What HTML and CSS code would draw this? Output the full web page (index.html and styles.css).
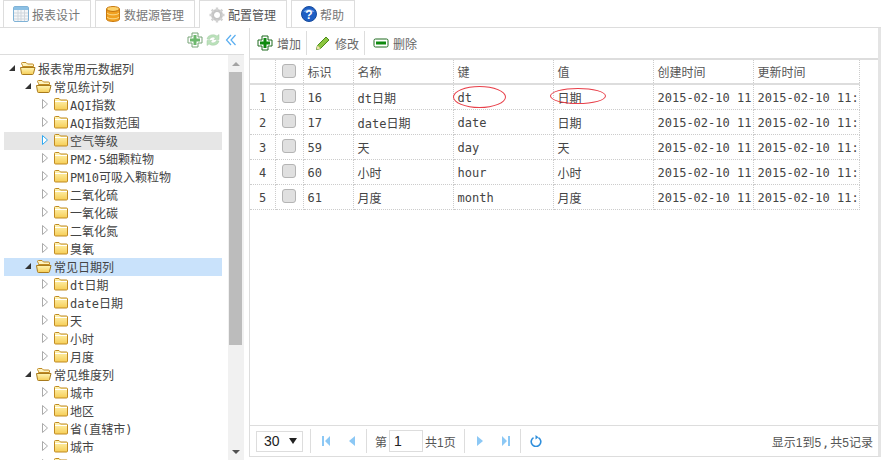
FILE: index.html
```html
<!DOCTYPE html>
<html lang="zh-CN">
<head>
    <meta charset="UTF-8">
    <title>配置管理</title>
    <link rel="stylesheet" href="styles.css">
</head>
<body>
    <svg class="defs" width="0" height="0">
        <defs>
            <linearGradient id="fold" x1="0" y1="0" x2="0" y2="1">
                <stop offset="0" stop-color="#fff6b8"/>
                <stop offset="1" stop-color="#f6cd55"/>
            </linearGradient>
            <symbol id="folder" viewBox="0 0 16 16">
                <path d="M1.500 3.500q0-1 1-1h3.500l1.500 1.500h6q1 0 1 1v8q0 1-1 1h-11q-1 0-1-1z" fill="url(#fold)" stroke="#c08a22"/>
                <path d="M2 5.500h12" stroke="#fff" fill="none"/>
            </symbol>
            <symbol id="folder-open" viewBox="0 0 16 16">
                <path d="M1.500 3.500q0-1 1-1h3.500l1.500 1.500h5q1 0 1 1v1.500h-11v-1z" fill="#fdf3c0" stroke="#c08a22"/>
                <path d="M.5 7.500h14.500l-1.500 6q-.2 1-1 1h-10q-1 0-1-1z" fill="url(#fold)" stroke="#a87a1c"/>
            </symbol>
            <symbol id="arr-open" viewBox="0 0 8 8">
                <path d="M1 7l6-6v6z" fill="#333"/>
            </symbol>
            <symbol id="arr-shut" viewBox="0 0 8 10">
                <path d="M1.500 .5l5 4.500-5 4.500z" fill="#fff" stroke="#aaa"/>
            </symbol>
            <symbol id="plus" viewBox="0 0 16 16">
                <path d="M5 1h6v4h4v6h-4v4h-6v-4h-4v-6h4z" fill="#fff" stroke="#1f6b1f"/>
                <path d="M6.500 3h3v3.500h3.500v3h-3.500v3.500h-3v-3.500h-3.500v-3h3.500z" fill="#0f8a0f"/>
            </symbol>
        </defs>
    </svg>

    <div class="tabs">
        <a class="tab tab-design">
            <svg class="tab-ico" viewBox="0 0 16 16"><rect x=".5" y=".5" width="15" height="15" rx="1.500" fill="#f4f6f8" stroke="#7fb2d6"/><rect x="1" y="1" width="14" height="3" fill="#8cc0e4"/><path d="M1 7h14M1 10h14M1 13h14M5 4v11M8 4v11M11.500 4v11" stroke="#cfd6dc"/></svg>
            报表设计
        </a>
        <a class="tab tab-source">
            <svg class="tab-ico" viewBox="0 0 16 16"><ellipse cx="8" cy="3" rx="6.500" ry="2.500" fill="#fcd16a" stroke="#c97a10"/><path d="M1.500 3v10c0 1.400 2.900 2.500 6.500 2.500s6.500-1.100 6.500-2.500v-10c0 1.400-2.900 2.500-6.500 2.500s-6.500-1.100-6.500-2.500z" fill="#f0a020" stroke="#c97a10"/><path d="M2 7c1 1.200 3 1.800 6 1.800s5-.6 6-1.800M2 11c1 1.200 3 1.800 6 1.800s5-.6 6-1.800" stroke="#fbdc8c" fill="none"/></svg>
            数据源管理
        </a>
        <a class="tab tab-config active">
            <svg class="tab-ico" viewBox="0 0 16 16"><circle cx="8" cy="8" r="4.500" fill="none" stroke="#c4c4c4" stroke-width="3"/><path d="M8 .5v3M8 12.500v3M.5 8h3M12.500 8h3M2.700 2.700l2.100 2.100M11.200 11.200l2.100 2.100M2.700 13.300l2.100-2.100M11.200 4.800l2.100-2.100" stroke="#d2d2d2" stroke-width="2.400"/></svg>
            配置管理
        </a>
        <a class="tab tab-help">
            <svg class="tab-ico" viewBox="0 0 16 16"><circle cx="8" cy="8" r="7.500" fill="#1e5fc4" stroke="#174a9c"/><path d="M2.500 6a6 4.500 0 0 1 11 0z" fill="#6d9ee6"/><text x="8" y="12.500" class="help-q">?</text></svg>
            帮助
        </a>
    </div>

    <div class="main">
        <div class="left">
            <div class="left-head">
                <svg class="ico pale" viewBox="0 0 16 16"><use href="#plus"/></svg>
                <svg class="ico pale" viewBox="0 0 16 16"><path d="M2 7a6 5 0 0 1 10-3l2-1.500v5h-5l1.500-1.500a3.500 3 0 0 0-6 1.500zM14 9a6 5 0 0 1-10 3l-2 1.500v-5h5l-1.500 1.500a3.500 3 0 0 0 6-1.500z" fill="#8ed08e" stroke="#6aa86a" stroke-width=".5"/></svg>
                <svg class="ico-collapse" viewBox="0 0 12 12"><path d="M6 1l-4.500 5 4.500 5M10.500 1l-4.500 5 4.500 5" fill="none" stroke="#5aaef0" stroke-width="1.200"/></svg>
            </div>
            <div class="left-body">
                <div class="tree">
                    <div class="node lv0"><svg class="arrow"><use href="#arr-open"/></svg><svg class="fold"><use href="#folder-open"/></svg>报表常用元数据列</div>
                    <div class="node lv1"><svg class="arrow"><use href="#arr-open"/></svg><svg class="fold"><use href="#folder-open"/></svg>常见统计列</div>
                    <div class="node lv2"><svg class="arrow"><use href="#arr-shut"/></svg><svg class="fold"><use href="#folder"/></svg>AQI指数</div>
                    <div class="node lv2"><svg class="arrow"><use href="#arr-shut"/></svg><svg class="fold"><use href="#folder"/></svg>AQI指数范围</div>
                    <div class="node lv2 hover"><svg class="arrow"><path d="M1.500 3.500l5 4.500-5 4.500z" fill="#fff" stroke="#2fa8f0"/></svg><svg class="fold"><use href="#folder"/></svg>空气等级</div>
                    <div class="node lv2"><svg class="arrow"><use href="#arr-shut"/></svg><svg class="fold"><use href="#folder"/></svg>PM2·5细颗粒物</div>
                    <div class="node lv2"><svg class="arrow"><use href="#arr-shut"/></svg><svg class="fold"><use href="#folder"/></svg>PM10可吸入颗粒物</div>
                    <div class="node lv2"><svg class="arrow"><use href="#arr-shut"/></svg><svg class="fold"><use href="#folder"/></svg>二氧化硫</div>
                    <div class="node lv2"><svg class="arrow"><use href="#arr-shut"/></svg><svg class="fold"><use href="#folder"/></svg>一氧化碳</div>
                    <div class="node lv2"><svg class="arrow"><use href="#arr-shut"/></svg><svg class="fold"><use href="#folder"/></svg>二氧化氮</div>
                    <div class="node lv2"><svg class="arrow"><use href="#arr-shut"/></svg><svg class="fold"><use href="#folder"/></svg>臭氧</div>
                    <div class="node lv1 selected"><svg class="arrow"><use href="#arr-open"/></svg><svg class="fold"><use href="#folder-open"/></svg>常见日期列</div>
                    <div class="node lv2"><svg class="arrow"><use href="#arr-shut"/></svg><svg class="fold"><use href="#folder"/></svg>dt日期</div>
                    <div class="node lv2"><svg class="arrow"><use href="#arr-shut"/></svg><svg class="fold"><use href="#folder"/></svg>date日期</div>
                    <div class="node lv2"><svg class="arrow"><use href="#arr-shut"/></svg><svg class="fold"><use href="#folder"/></svg>天</div>
                    <div class="node lv2"><svg class="arrow"><use href="#arr-shut"/></svg><svg class="fold"><use href="#folder"/></svg>小时</div>
                    <div class="node lv2"><svg class="arrow"><use href="#arr-shut"/></svg><svg class="fold"><use href="#folder"/></svg>月度</div>
                    <div class="node lv1"><svg class="arrow"><use href="#arr-open"/></svg><svg class="fold"><use href="#folder-open"/></svg>常见维度列</div>
                    <div class="node lv2"><svg class="arrow"><use href="#arr-shut"/></svg><svg class="fold"><use href="#folder"/></svg>城市</div>
                    <div class="node lv2"><svg class="arrow"><use href="#arr-shut"/></svg><svg class="fold"><use href="#folder"/></svg>地区</div>
                    <div class="node lv2"><svg class="arrow"><use href="#arr-shut"/></svg><svg class="fold"><use href="#folder"/></svg>省(直辖市)</div>
                    <div class="node lv2"><svg class="arrow"><use href="#arr-shut"/></svg><svg class="fold"><use href="#folder"/></svg>城市</div>
                    <div class="node lv2"><svg class="arrow"><use href="#arr-shut"/></svg><svg class="fold"><use href="#folder"/></svg></div>
                </div>
                <div class="scrollbar">
                    <div class="sb-up"></div>
                    <div class="sb-thumb"></div>
                    <div class="sb-rest"></div>
                    <div class="sb-down"></div>
                </div>
            </div>
        </div>

        <div class="right">
            <div class="toolbar">
                <a class="tool"><svg class="ico" viewBox="0 0 16 16"><use href="#plus"/></svg>增加</a>
                <span class="sep"></span>
                <a class="tool"><svg class="ico" viewBox="0 0 16 16"><path d="M1.500 14.500l1-4 8.500-8.500 3 3-8.500 8.500z" fill="#8cc63f" stroke="#4d8a1c"/><path d="M1.500 14.500l1-4 3 3z" fill="#f3dfae"/></svg>修改</a>
                <span class="sep"></span>
                <a class="tool"><svg class="ico" viewBox="0 0 16 16"><rect x="1" y="4" width="14" height="8" rx="1.500" fill="#fff" stroke="#1f6b1f"/><rect x="3" y="6.500" width="10" height="3" fill="#0f8a0f"/></svg>删除</a>
            </div>
            <div class="grid-wrap">
                <table class="grid">
                    <colgroup>
                        <col class="c-num"><col class="c-chk"><col class="c-id"><col class="c-wide"><col class="c-wide"><col class="c-wide"><col class="c-wide"><col class="c-last">
                    </colgroup>
                    <thead>
                        <tr><th></th><th><span class="chk"></span></th><th>标识</th><th>名称</th><th>键</th><th>值</th><th>创建时间</th><th>更新时间</th></tr>
                    </thead>
                    <tbody>
                        <tr><td class="num">1</td><td><span class="chk"></span></td><td>16</td><td>dt日期</td><td>dt</td><td>日期</td><td>2015-02-10 11</td><td>2015-02-10 11:</td></tr>
                        <tr><td class="num">2</td><td><span class="chk"></span></td><td>17</td><td>date日期</td><td>date</td><td>日期</td><td>2015-02-10 11</td><td>2015-02-10 11:</td></tr>
                        <tr><td class="num">3</td><td><span class="chk"></span></td><td>59</td><td>天</td><td>day</td><td>天</td><td>2015-02-10 11</td><td>2015-02-10 11:</td></tr>
                        <tr><td class="num">4</td><td><span class="chk"></span></td><td>60</td><td>小时</td><td>hour</td><td>小时</td><td>2015-02-10 11</td><td>2015-02-10 11:</td></tr>
                        <tr><td class="num">5</td><td><span class="chk"></span></td><td>61</td><td>月度</td><td>month</td><td>月度</td><td>2015-02-10 11</td><td>2015-02-10 11:</td></tr>
                    </tbody>
                </table>
                <span class="ring ring-key"></span>
                <span class="ring ring-val"></span>
            </div>
            <div class="pager">
                <div class="page-size">30<span class="caret"></span></div>
                <span class="sep"></span>
                <svg class="pg-ico" viewBox="0 0 12 12"><path d="M2 1h2v10h-2zM10 1v10l-5-5z"/></svg>
                <svg class="pg-ico" viewBox="0 0 12 12"><path d="M9 1v10l-6-5z"/></svg>
                <span class="sep"></span>
                <span class="pg-text">第</span>
                <span class="pg-input">1</span>
                <span class="pg-text pg-total">共1页</span>
                <span class="sep"></span>
                <svg class="pg-ico" viewBox="0 0 12 12"><path d="M3 1v10l6-5z"/></svg>
                <svg class="pg-ico" viewBox="0 0 12 12"><path d="M2 1v10l5-5zM8 1h2v10h-2z"/></svg>
                <span class="sep"></span>
                <svg class="pg-ico" viewBox="0 0 12 12"><path d="M3.500 2.600a4.800 4.800 0 1 0 5 0" fill="none" stroke="#2f8fdc" stroke-width="1.600"/><path d="M5.500 0v4.500l3-2.200z" fill="#2f8fdc"/></svg>
                <span class="pg-info">显示1到5<span class="comma">,</span>共5记录</span>
            </div>
        </div>
    </div>
</body>
</html>
```

FILE: styles.css
```css
* {
    box-sizing: border-box;
}
html, body {
    margin: 0;
    height: 460px;
    overflow: hidden;
    background-color: white;
}
body {
    display: flex;
    flex-direction: column;
    font-family: "DejaVu Sans Mono", "Noto Sans CJK SC", monospace;
    font-size: 12px;
    color: #444;
}
.defs {
    position: absolute;
}

/* tabs */
.tabs {
    display: flex;
    height: 28px;
    padding-left: 3px;
    border-bottom: 1px solid #ddd;
    font-family: "Noto Sans CJK SC", sans-serif;
}
.tab {
    display: flex;
    align-items: center;
    gap: 3px;
    height: 27px;
    padding-left: 9px;
    border: 1px solid #ddd;
    border-bottom: none;
    color: #777;
}
.tab-design {
    width: 88px;
}
.tab-source {
    width: 100px;
    margin-left: 4px;
}
.tab-config {
    width: 88px;
    margin-left: 4px;
}
.tab-help {
    width: 64px;
    margin-left: 4px;
}
.tab.active {
    height: 28px;
    background-color: white;
    color: #555;
}
.tab-ico {
    width: 16px;
    height: 16px;
    flex: none;
}
.help-q {
    font-family: "Liberation Sans", sans-serif;
    font-size: 12px;
    font-weight: bold;
    fill: white;
    text-anchor: middle;
}

/* left panel */
.main {
    display: flex;
    flex: 1;
    min-height: 0;
}
.left {
    display: flex;
    flex-direction: column;
    width: 244px;
    flex: none;
}
.left-head {
    display: flex;
    align-items: center;
    justify-content: flex-end;
    gap: 2px;
    height: 27px;
    padding: 0 7px 3px 0;
    border-bottom: 1px solid #ddd;
}
.ico {
    width: 16px;
    height: 16px;
    flex: none;
}
.ico.pale {
    opacity: 0.6;
}
.ico-collapse {
    width: 12px;
    height: 12px;
    margin-left: 2px;
}
.left-body {
    display: flex;
    flex: 1;
    min-height: 0;
}
.tree {
    flex: 1;
    padding: 5px 6px 0 4px;
    overflow: hidden;
}
.node {
    display: flex;
    align-items: center;
    height: 18px;
    padding-bottom: 2px;
    white-space: nowrap;
}
.node.hover {
    background-color: #e6e6e6;
}
.node.selected {
    background-color: #c9e2fb;
}
.lv0 {
    padding-left: 4px;
}
.lv1 {
    padding-left: 20px;
}
.lv2 {
    padding-left: 37px;
}
.arrow {
    width: 8px;
    height: 16px;
    margin-right: 4px;
    flex: none;
}
.fold {
    width: 16px;
    height: 16px;
    margin-right: 2px;
    flex: none;
}
.lv2 .fold {
    margin-right: 1px;
}
.scrollbar {
    display: flex;
    flex-direction: column;
    width: 16px;
    flex: none;
    background-color: #f1f1f1;
}
.sb-up, .sb-down {
    height: 17px;
    flex: none;
    display: flex;
    align-items: center;
    justify-content: center;
}
.sb-up::before {
    content: "";
    border: 4px solid transparent;
    border-top: none;
    border-bottom: 4px solid #a3a3a3;
}
.sb-down::before {
    content: "";
    border: 4px solid transparent;
    border-bottom: none;
    border-top: 4px solid #505050;
}
.sb-thumb {
    height: 273px;
    margin: 0 2px 0 1px;
    background-color: #bcbcbc;
}
.sb-rest {
    flex: 1;
}

/* right panel */
.right {
    display: flex;
    flex-direction: column;
    flex: none;
    width: 632px;
    height: 429px;
    margin-left: 5px;
    border-left: 1px solid #ddd;
    border-right: 3px solid #e4e4e4;
    border-bottom: 1px solid #ddd;
}
.toolbar {
    display: flex;
    align-items: center;
    height: 32px;
    padding-left: 7px;
    border-bottom: 2px solid #ddd;
    font-family: "Noto Sans CJK SC", sans-serif;
    color: #666;
}
.toolbar .sep {
    margin: 0 8px 0 5px;
}
.tool {
    display: flex;
    align-items: center;
    gap: 4px;
}
.sep {
    width: 1px;
    height: 24px;
    background-color: #ddd;
    flex: none;
}
.grid-wrap {
    flex: 1;
    position: relative;
    min-height: 0;
}
.grid {
    border-collapse: collapse;
    table-layout: fixed;
    width: 609px;
}
.c-num {
    width: 25px;
}
.c-chk {
    width: 28px;
}
.c-id {
    width: 50px;
}
.c-wide {
    width: 100px;
}
.c-last {
    width: 106px;
}
.grid th, .grid td {
    height: 25px;
    padding: 0 0 0 4px;
    border-right: 1px dotted #ccc;
    border-bottom: 1px dotted #ccc;
    overflow: hidden;
    white-space: nowrap;
    text-align: left;
    font-weight: normal;
}
.grid td {
    padding-top: 2px;
}
.grid th {
    height: 24px;
    border-bottom: 2px solid #ddd;
    color: #555;
}
.grid td.num {
    padding-left: 9px;
}
.chk {
    display: block;
    width: 14px;
    height: 14px;
    margin: -2px 0 0 2px;
    border: 1px solid #b4b4b4;
    border-radius: 3px;
    background-color: #e0e0e0;
}
.grid td .chk {
    margin-top: -4px;
}
.ring {
    position: absolute;
    border: 1px solid #e8404a;
    border-radius: 50%;
}
.ring-key {
    left: 203px;
    top: 26px;
    width: 53px;
    height: 22px;
}
.ring-val {
    left: 300px;
    top: 28px;
    width: 56px;
    height: 16px;
}

/* pager */
.pager {
    display: flex;
    align-items: center;
    height: 31px;
    padding: 0 5px 0 6px;
    border-top: 1px solid #ddd;
    font-family: "Liberation Sans", "Noto Sans CJK SC", sans-serif;
}
.pager .sep {
    margin: 0 7px;
}
.page-size {
    display: flex;
    align-items: center;
    justify-content: space-between;
    width: 47px;
    height: 21px;
    padding: 0 5px 0 7px;
    border: 1px solid #ddd;
    font-size: 14px;
    color: #222;
}
.caret {
    border: 4px solid transparent;
    border-bottom: none;
    border-top: 6px solid #222;
}
.pg-ico {
    width: 12px;
    height: 12px;
    margin: 0 1px 0 2px;
    fill: #8cc8f5;
    flex: none;
}
.pg-ico + .pg-ico {
    margin-left: 13px;
}
.pg-text {
    margin-left: 1px;
    color: #555;
}
.pg-input {
    width: 34px;
    height: 22px;
    margin: 0 2px;
    padding-left: 4px;
    border: 1px solid #ddd;
    font-size: 14px;
    line-height: 20px;
    color: #222;
}
.pg-total {
    margin: 0 1px 0 0;
}
.pg-info {
    margin-left: auto;
    color: #555;
}
.comma {
    padding: 0 1px;
    font-family: "DejaVu Sans Mono", monospace;
}
```
